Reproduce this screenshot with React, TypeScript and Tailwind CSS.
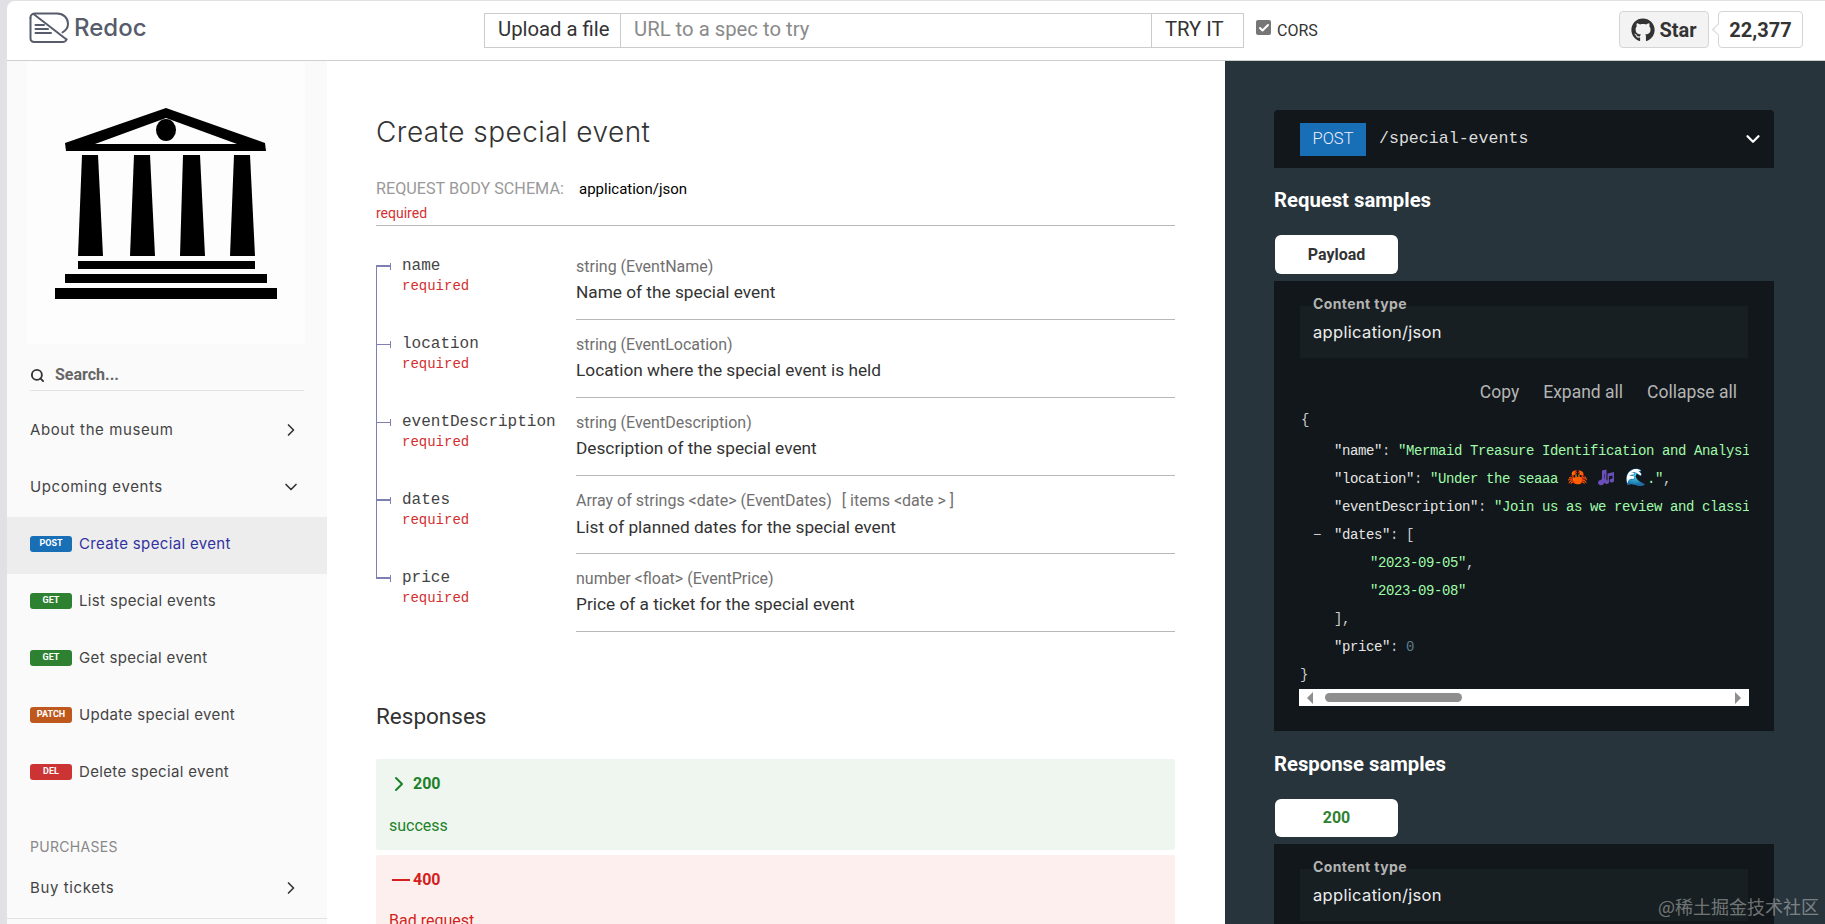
import { Check, ChevronDown, ChevronRight, Search } from "lucide-react";
import { FaGithub } from "react-icons/fa";

const menuFont = "font-['Inter',sans-serif]";
const monoFont = "font-['Liberation_Mono',monospace]";

const endpoints = [
  { badge: "POST", color: "bg-[#186fb5]", label: "Create special event", active: true },
  { badge: "GET", color: "bg-[#2f8132]", label: "List special events" },
  { badge: "GET", color: "bg-[#2f8132]", label: "Get special event" },
  { badge: "PATCH", color: "bg-[#bf581d]", label: "Update special event" },
  { badge: "DEL", color: "bg-[#cc3333]", label: "Delete special event" },
];

const fields = [
  { name: "name", type: "string (EventName)", desc: "Name of the special event", thick: true },
  { name: "location", type: "string (EventLocation)", desc: "Location where the special event is held" },
  { name: "eventDescription", type: "string (EventDescription)", desc: "Description of the special event" },
  {
    name: "dates",
    type: "Array of strings <date> (EventDates)",
    extra: "[ items <date > ]",
    desc: "List of planned dates for the special event",
    thick: true,
  },
  { name: "price", type: "number <float> (EventPrice)", desc: "Price of a ticket for the special event", thick: true },
];

function RedocLogo() {
  return (
    <svg width="41" height="32" viewBox="0 0 41 32" fill="none" stroke="#565c6b" strokeWidth="2" strokeLinecap="round" strokeLinejoin="round">
      <path d="M1.5 6a4 4 0 0 1 4-4.5H28C34.500 1.500 39 6.200 39 11.800C39 15.600 37 18.600 33.500 20.400" />
      <path d="M4.500 2L37.500 27.500" />
      <path d="M1.500 6V26.500a3.500 3.500 0 0 0 3.500 3.500H33.500a4 4 0 0 0 4-2.500" />
      <path d="M6.500 13H15M6.500 17H19M6.500 21H22" />
    </svg>
  );
}

function MuseumLogo() {
  return (
    <svg width="222" height="191" viewBox="55 107 222 191" fill="#000">
      <path fillRule="evenodd" d="M166 107L265 142L266 150H66L65 142ZM166 117L95 143H237Z" />
      <ellipse cx="166" cy="129" rx="10" ry="11" />
      <path d="M82 154H98L103 255H78Z" />
      <path d="M134 154H150L155 255H130Z" />
      <path d="M183 154H200L205 255H180Z" />
      <path d="M234 154H250L255 255H230Z" />
      <rect x="78" y="260" width="177" height="8" />
      <rect x="65" y="273" width="202" height="9" />
      <rect x="55" y="287" width="222" height="11" />
    </svg>
  );
}

function MusicNotes() {
  return (
    <svg width="17" height="17" viewBox="0 0 17 17" className="inline-block align-[-3px] mx-[1px]" fill="#6b4fb8">
      <path d="M4 1.500L8.500 0.500V11.500A2.800 2.300 0 1 1 6.500 9.400V5L6 5.100V13.500A3 2.500 0 1 1 4 11.300Z" />
      <path d="M9.500 4.500L16 3V11.500A2.200 1.900 0 1 1 14.500 9.800V6.500L11 7.300V13A2.200 1.900 0 1 1 9.500 11.300Z" />
    </svg>
  );
}

function MenuRow({ label, open }: { label: string; open?: boolean }) {
  return (
    <div className={`h-[57px] pl-[23px] pr-[26px] pb-[3px] flex items-center justify-between text-[15px] tracking-[0.6px] text-[#444] ${menuFont}`}>
      <span>{label}</span>
      {open ? <ChevronDown className="w-[20px] h-[20px] text-[#333]" strokeWidth={2} /> : <ChevronRight className="w-[20px] h-[20px] text-[#333]" strokeWidth={2} />}
    </div>
  );
}

function Sidebar() {
  return (
    <aside className="w-[320px] bg-[#fafafa] shrink-0">
      <div className="mt-[1px] ml-[20px] w-[278px] h-[282px] bg-[#fdfdfd] flex items-center justify-center">
        <MuseumLogo />
      </div>
      <div className="mx-[23px] h-[47px] pt-[16px] border-b border-[#e2e2e2] flex items-center gap-[10px] text-[16px] font-bold text-[#666]">
        <Search className="w-[15px] h-[15px] text-[#333]" strokeWidth={3} />
        <span>Search...</span>
      </div>
      <div className="pt-[12px]">
        <MenuRow label="About the museum" />
        <MenuRow label="Upcoming events" open />
      </div>
      <div>
        {endpoints.map((item) => (
          <div
            key={item.label}
            className={`h-[57px] pl-[23px] pb-[3px] flex items-center gap-[7px] text-[15px] tracking-[0.35px] ${menuFont} ${item.active ? "bg-[#ededed] text-[#32329f]" : "text-[#444]"}`}
          >
            <span className={`w-[42px] h-[16px] rounded-[3px] flex items-center justify-center text-[9px] tracking-normal font-bold text-white font-['Roboto',sans-serif] ${item.color}`}>
              {item.badge}
            </span>
            <span>{item.label}</span>
          </div>
        ))}
      </div>
      <div className={`pt-[37px] pb-[6px] pl-[23px] text-[14px] tracking-[0.3px] leading-[16px] text-[#888] ${menuFont}`}>PURCHASES</div>
      <div className="border-b border-[#e2e2e2]">
        <MenuRow label="Buy tickets" />
      </div>
    </aside>
  );
}

function FieldRow({ field, index }: { field: (typeof fields)[number]; index: number }) {
  const last = index === fields.length - 1;
  return (
    <div className="flex h-[78px]">
      <div className="relative w-[200px] shrink-0 pl-[26px] pt-[14px]">
        <div className={`absolute left-0 w-px bg-[#7f7fb2] ${index === 0 ? "top-[24px] bottom-0" : last ? "top-0 h-[24px]" : "top-0 bottom-0"}`} />
        <div className={`absolute left-0 w-[15px] bg-[#7f7fb2] ${field.thick ? "top-[23px] h-[2px]" : "top-[24px] h-px"}`} />
        <div className="absolute left-[14px] top-[21px] w-px h-[7px] bg-[#7f7fb2]" />
        <div className={`text-[16px] leading-[20px] text-[#444] ${monoFont}`}>{field.name}</div>
        <div className={`text-[14px] leading-[20px] text-[#d32f2f] ${monoFont}`}>required</div>
      </div>
      <div className="flex-1 border-b border-[#b8b8b8] pt-[15px]">
        <div className="text-[16px] leading-[20px] text-[#707070]">
          {field.type}
          {field.extra && <span className="ml-[10px]">{field.extra}</span>}
        </div>
        <div className={`text-[17.25px] leading-[20px] text-[#333] ${field.extra ? "mt-[6px]" : "mt-[5px]"}`}>{field.desc}</div>
      </div>
    </div>
  );
}

function MainColumn() {
  return (
    <main className="w-[898px] shrink-0 bg-white pl-[49px] pr-[50px] pt-[53px]">
      <h1 className={`text-[28px] tracking-[0.45px] leading-[36px] font-light text-[#333] ${menuFont}`}>Create special event</h1>
      <div className="mt-[29px] border-b border-[#b8b8b8] pb-[3px]">
        <div className="flex items-center h-[20px]">
          <span className="text-[16.2px] text-[#999] w-[203px] whitespace-nowrap">REQUEST BODY SCHEMA:</span>
          <span className="text-[15px] text-black">application/json</span>
        </div>
        <div className="mt-[5px] text-[14px] leading-[18px] text-[#d32f2f]">required</div>
      </div>
      <div className="mt-[16px]">
        {fields.map((field, i) => (
          <FieldRow key={field.name} field={field} index={i} />
        ))}
      </div>
      <h2 className="mt-[69px] text-[22.5px] leading-[30px] text-[#333]">Responses</h2>
      <div className="mt-[28px] h-[91px] rounded-[2px] bg-[#eef6ef] text-[#1d8127] pl-[13px]">
        <div className="pt-[15px] flex items-center h-[35px] text-[16px] font-bold">
          <ChevronRight className="w-[24px] h-[24px] -ml-[2px]" strokeWidth={2} />
          <span className="ml-[2px]">200</span>
        </div>
        <div className="mt-[22px] text-[16px] leading-[20px]">success</div>
      </div>
      <div className="mt-[5px] h-[91px] rounded-[2px] bg-[#fcefee] text-[#d41f1c] pl-[13px]">
        <div className="pt-[15px] flex items-center h-[35px] text-[16px] font-bold">
          <span className="w-[18px] h-[2px] ml-[3px] mr-[3px] bg-[#d41f1c]" />
          <span>400</span>
        </div>
        <div className="mt-[21px] text-[16px] leading-[20px]">Bad request</div>
      </div>
    </main>
  );
}

function ContentType() {
  return (
    <div className="relative mt-[25px] mx-[26px] h-[52px] bg-[#181f22] pl-[14px] flex items-center">
      <span className={`absolute left-[13px] -top-[10px] text-[14px] tracking-[0.4px] leading-[16px] font-bold text-[#b3b3b3] ${menuFont}`}>Content type</span>
      <span className={`text-[16.5px] tracking-[0.33px] -ml-[1px] text-[#eee] ${menuFont}`}>application/json</span>
    </div>
  );
}

function Key({ children }: { children: string }) {
  return <span className="text-[#e6e6e6]">{children}</span>;
}

function Str({ children }: { children: React.ReactNode }) {
  return <span className="text-[#a0fbaa]">{children}</span>;
}

function Emoji({ children }: { children: string }) {
  return <span className="text-[17px] tracking-normal mx-[1px]">{children}</span>;
}

function CodeLine({ indent, children, height = "h-[28px]" }: { indent: string; children: React.ReactNode; height?: string }) {
  return <div className={`relative leading-[28px] whitespace-pre ${height} ${indent}`}>{children}</div>;
}

function RightPanel() {
  return (
    <section className="w-[600px] shrink-0 bg-[#28343b] pl-[49px] pr-[51px] pt-[49px] text-white">
      <div className="h-[58px] rounded-t-[4px] bg-[#11171a] pl-[26px] pr-[10px] flex items-center">
        <span className="w-[66px] h-[33px] bg-[#186fb5] flex items-center justify-center text-[16.5px] font-light text-[#eef]">POST</span>
        <span className={`ml-[13px] text-[16.6px] text-[#ddd] ${monoFont}`}>/special-events</span>
        <ChevronDown className="ml-auto w-[22px] h-[22px]" strokeWidth={2.5} />
      </div>

      <h3 className="mt-[18px] text-[20.3px] leading-[28px] font-bold">Request samples</h3>
      <div className="mt-[21px] ml-[1px] w-[123px] h-[39px] rounded-[6px] bg-white flex items-center justify-center text-[16px] font-bold text-[#333]">Payload</div>

      <div className="mt-[7px] h-[450px] bg-[#11171a] overflow-hidden">
        <ContentType />
        <div className="mt-[24px] pr-[37px] h-[20px] flex justify-end gap-[24px] text-[17.5px] leading-[20px] text-[#b5b5b5]">
          <span>Copy</span>
          <span>Expand all</span>
          <span>Collapse all</span>
        </div>
        <div className={`mt-[4px] mx-[25px] overflow-hidden text-[14px] tracking-[-0.4px] text-[#ccc] ${monoFont}`}>
          <CodeLine indent="pl-[2px]" height="h-[31px]">{"{"}</CodeLine>
          <CodeLine indent="pl-[35px]">
            <Key>"name"</Key>: <Str>"Mermaid Treasure Identification and Analysis"</Str>,
          </CodeLine>
          <CodeLine indent="pl-[35px]">
            <Key>"location"</Key>: <Str>"Under the seaaa <Emoji>🦀</Emoji> <MusicNotes /> <Emoji>🌊</Emoji>."</Str>,
          </CodeLine>
          <CodeLine indent="pl-[35px]">
            <Key>"eventDescription"</Key>: <Str>"Join us as we review and classify a rare collection of 20 thingamabobs"</Str>,
          </CodeLine>
          <CodeLine indent="pl-[35px]">
            <span className="absolute left-[14px]">−</span>
            <Key>"dates"</Key>: [
          </CodeLine>
          <CodeLine indent="pl-[71px]">
            <Str>"2023-09-05"</Str>,
          </CodeLine>
          <CodeLine indent="pl-[71px]">
            <Str>"2023-09-08"</Str>
          </CodeLine>
          <CodeLine indent="pl-[35px]">],</CodeLine>
          <CodeLine indent="pl-[35px]">
            <Key>"price"</Key>: <span className="text-[#5a7d8c]">0</span>
          </CodeLine>
          <CodeLine indent="pl-[1px]" height="h-[25px]">{"}"}</CodeLine>
        </div>
        <div className="mt-[3px] mx-[25px] h-[17px] bg-white flex items-center px-[8px]">
          <span className="w-0 h-0 border-y-[6px] border-y-transparent border-r-[6px] border-r-[#8e8e8e]" />
          <span className="ml-[12px] w-[137px] h-[9px] rounded-full bg-[#8e8e8e]" />
          <span className="ml-auto w-0 h-0 border-y-[6px] border-y-transparent border-l-[6px] border-l-[#8e8e8e]" />
        </div>
      </div>

      <h3 className="mt-[19px] text-[20.3px] leading-[28px] font-bold">Response samples</h3>
      <div className="mt-[21px] ml-[1px] w-[123px] h-[38px] rounded-[6px] bg-white flex items-center justify-center text-[16px] font-bold text-[#2f8132]">200</div>
      <div className="mt-[7px] h-[200px] bg-[#11171a] overflow-hidden">
        <ContentType />
      </div>
    </section>
  );
}

export default function App() {
  return (
    <div className="relative w-[1825px] h-[924px] overflow-hidden flex bg-[#e1e1e5] font-['Roboto',sans-serif]">
      <div className="w-[7px] shrink-0" />
      <div className="flex-1 min-w-0">
        {/* Top bar */}
        <header className="h-[60px] bg-white rounded-tl-[8px] border-b border-[#cfcfcf] mt-[1px] flex items-start relative">
          <div className="ml-[22px] mt-[11px]">
            <RedocLogo />
          </div>
          <span className={`ml-[4px] mt-[11px] text-[24px] leading-[32px] font-medium text-[#565c6b] ${menuFont}`}>Redoc</span>
          <div className="absolute left-[477px] top-[12px] flex h-[35px] w-[760px] border border-[#ccc] text-[20.3px] leading-[31px] whitespace-nowrap">
            <span className="w-[136px] px-[13px] border-r border-[#ccc] text-[#333]">Upload a file</span>
            <span className="flex-1 px-[13px] text-[#8a8a8a]">URL to a spec to try</span>
            <span className="w-[92px] px-[13px] border-l border-[#ccc] text-[#333]">TRY IT</span>
          </div>
          <div className="absolute left-[1249px] top-[19px] flex items-start gap-[6px] text-[16px] leading-[24px] text-[#333]">
            <span className="w-[15px] h-[15px] rounded-[2px] bg-[#767676] flex items-center justify-center">
              <Check className="w-[12px] h-[12px] text-white" strokeWidth={4} />
            </span>
            <span className="-mt-[1px]">CORS</span>
          </div>
          <div className="absolute left-[1612px] top-[10px] w-[90px] h-[37px] rounded-[4px] border border-[#d5d5d5] bg-[#f3f3f3] flex items-center justify-center gap-[4px] text-[20px] font-bold text-[#333]">
            <FaGithub className="w-[24px] h-[24px]" />
            Star
          </div>
          <div className="absolute left-[1711px] top-[10px] w-[85px] h-[37px] rounded-[4px] border border-[#d5d5d5] bg-white flex items-center justify-center text-[20px] font-bold text-[#333]">
            <span className="absolute -left-[5px] top-[13px] w-[9px] h-[9px] rotate-45 bg-white border-l border-b border-[#d5d5d5]" />
            22,377
          </div>
        </header>
        <div className="flex">
          <Sidebar />
          <MainColumn />
          <RightPanel />
        </div>
      </div>
      <div className="absolute left-[1658px] top-[894px] text-[18px] leading-[24px] text-[#ffffff]/40 font-['Noto_Sans_CJK_SC',sans-serif]">@稀土掘金技术社区</div>
    </div>
  );
}
